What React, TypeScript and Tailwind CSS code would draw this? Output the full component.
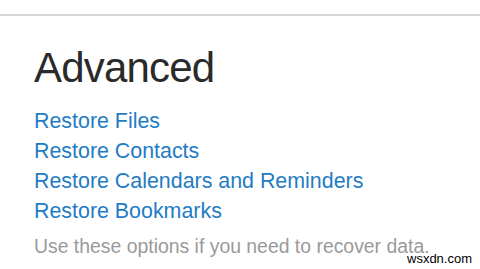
const links = ['Restore Files', 'Restore Contacts', 'Restore Calendars and Reminders', 'Restore Bookmarks']

export default function App() {
  return (
    <div className="relative h-[269px] w-[480px] overflow-hidden bg-white font-['Liberation_Sans',Arial,sans-serif]">
      <div className="pt-[14px]">
        <div className="h-[2px] bg-[#d6d6d6]" />
      </div>
      <div className="pl-[34px]">
        <h1 className="mt-[31px] text-[42px] leading-[42px] tracking-[-0.8px] text-[#2a2a2a]">Advanced</h1>
        <div className="mt-[17px] flex flex-col">
          {links.map((label) => (
            <a key={label} className="text-[21.4px] leading-[30px] text-[#1f7cc4]">
              {label}
            </a>
          ))}
        </div>
        <p className="mt-[8px] text-[19.4px] leading-[24px] text-[#9a9a9a]">Use these options if you need to recover data.</p>
      </div>
      <div className="absolute left-[407px] top-[252px] text-[13px] leading-[14px] text-black">wsxdn.com</div>
    </div>
  )
}
